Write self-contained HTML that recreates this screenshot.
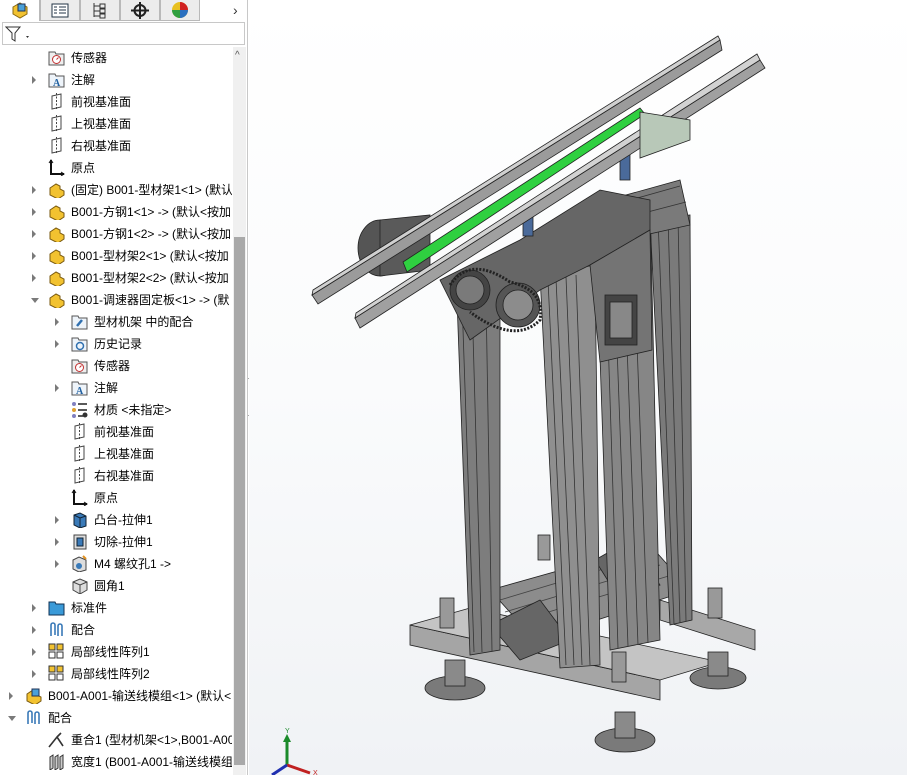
<!DOCTYPE html><html><head><meta charset="utf-8"><style>
*{margin:0;padding:0;box-sizing:border-box}
body{width:907px;height:775px;overflow:hidden;background:#fff;font-family:"Liberation Sans","Noto Sans CJK SC",sans-serif;font-size:12px;color:#000;position:relative}
#panel{position:absolute;left:0;top:0;width:248px;height:775px;background:#fff;border-right:1px solid #c8c8c8;overflow:hidden}
.tab{position:absolute;top:0;height:21px;width:40px;background:#ececec;border:1px solid #b9b9b9;border-top:none}
.row{position:absolute;height:22px;line-height:22px;white-space:nowrap}
.ex{position:absolute;width:0;height:0;border-top:4px solid transparent;border-bottom:4px solid transparent;border-left:4px solid #7a7a7a}
.ex.o{border-left:4px solid transparent;border-right:4px solid transparent;border-top:5px solid #7a7a7a;border-bottom:none}
.ic{position:absolute;width:17px;height:17px}
.t{position:absolute}
#vp{position:absolute;left:249px;top:0;width:658px;height:775px;background:linear-gradient(#fff 0%,#fafbfc 50%,#f0f2f5 100%)}
</style></head><body>
<div id="panel">
<div class="tab" style="left:0;background:#fff;border-bottom:none;border-left:none"></div>
<svg style="position:absolute;left:10px;top:1px" width="20" height="18"><path d="M3 6 L10 2 L17 6 L17 13 L10 17 L3 13Z" fill="#f2c230" stroke="#8a6a10"/><rect x="8" y="3" width="7" height="7" fill="#4aa0d8" stroke="#235"/></svg>
<div class="tab" style="left:40px"></div><svg style="position:absolute;left:51px;top:3px" width="18" height="15"><rect x="1" y="1" width="16" height="13" fill="#fff" stroke="#234"/><path d="M3 4h3M8 4h7M3 7h3M8 7h7M3 10h3M8 10h7" stroke="#234"/></svg>
<div class="tab" style="left:80px"></div><svg style="position:absolute;left:92px;top:2px" width="16" height="17"><path d="M2 1v14M2 4h6M2 9h6M2 14h6" stroke="#333" fill="none"/><rect x="8" y="2" width="5" height="4" fill="none" stroke="#333"/><rect x="8" y="7" width="5" height="4" fill="none" stroke="#333"/><rect x="8" y="12" width="5" height="4" fill="none" stroke="#333"/></svg>
<div class="tab" style="left:120px"></div><svg style="position:absolute;left:131px;top:2px" width="18" height="17"><circle cx="9" cy="8.5" r="5.5" fill="none" stroke="#222" stroke-width="2"/><path d="M9 0v17M0 8.5h18" stroke="#222" stroke-width="2"/></svg>
<div class="tab" style="left:160px"></div><svg style="position:absolute;left:171px;top:1px" width="18" height="18"><circle cx="9" cy="9" r="8" fill="#e8c020"/><path d="M9 9L9 1A8 8 0 0 1 17 9Z" fill="#d02020"/><path d="M9 9L17 9A8 8 0 0 1 9 17Z" fill="#2a70c0"/><path d="M9 9L9 17A8 8 0 0 1 1 9Z" fill="#30a040"/></svg>
<div style="position:absolute;left:233px;top:2px;font-size:14px;color:#333">›</div>
<div style="position:absolute;left:2px;top:22px;width:243px;height:23px;border:1px solid #c8c8c8;background:#fff"></div>
<svg style="position:absolute;left:5px;top:25px" width="26" height="18"><path d="M1 2h14l-5 6v8l-3-2v-6Z" fill="#fff" stroke="#333"/><path d="M21 11l3 0-1.5 2z" fill="#333"/></svg>
<div style="position:absolute;left:233px;top:47px;width:13px;height:728px;background:#f0f0f0"></div>
<div style="position:absolute;left:235px;top:50px;color:#555;font-size:10px">^</div>
<div style="position:absolute;left:234px;top:237px;width:11px;height:528px;background:#a9a9a9"></div>
<div id="tree" style="position:absolute;left:0;top:0;width:232px;height:775px;overflow:hidden"></div>
</div>
<div style="position:absolute;left:248px;top:378px;width:9px;height:38px;background:#fff;border:1px solid #aaa;border-left:none"></div>
<div style="position:absolute;left:250px;top:393px;width:5px;height:5px;border-radius:50%;background:#bbb"></div>
<div id="vp">
<svg width="658" height="775" viewBox="249 0 658 775" style="position:absolute;left:0;top:0">
<g stroke="#222" stroke-width="0.8">
<!-- base -->
<polygon points="660,600 755,630 755,650 660,620" fill="#a8a8a8"/>
<polygon points="410,625 660,680 660,700 410,645" fill="#a5a5a5"/>
<polygon points="410,625 470,608 720,662 660,680" fill="#c4c4c4"/>
<ellipse cx="455" cy="688" rx="30" ry="12" fill="#7a7a7a"/><rect x="445" y="660" width="20" height="26" fill="#8a8a8a"/>
<ellipse cx="625" cy="740" rx="30" ry="12" fill="#7a7a7a"/><rect x="615" y="712" width="20" height="26" fill="#8a8a8a"/>
<ellipse cx="718" cy="678" rx="28" ry="11" fill="#7a7a7a"/><rect x="708" y="652" width="20" height="24" fill="#8a8a8a"/>
<rect x="440" y="598" width="14" height="30" fill="#999"/><rect x="612" y="652" width="14" height="30" fill="#999"/><rect x="708" y="588" width="14" height="30" fill="#999"/><rect x="538" y="535" width="12" height="25" fill="#999"/>
<!-- lower frame -->
<polygon points="490,590 650,545 690,590 535,640" fill="#8c8c8c"/>
<path d="M500 600L650 555M505 612L660 565M515 622L672 575" stroke="#444"/>
<polygon points="490,625 540,600 570,640 520,660" fill="#666"/>
<polygon points="595,560 630,540 660,585 620,600" fill="#666"/>
<!-- legs -->
<polygon points="457,300 500,292 500,650 470,655" fill="#7d7d7d"/>
<polygon points="650,220 690,215 692,620 670,625" fill="#7a7a7a"/>
<polygon points="595,210 650,200 660,640 610,650" fill="#868686"/>
<polygon points="540,275 595,265 600,665 560,668" fill="#8f8f8f"/>
<path d="M548 280L566 665M556 279L574 665M566 277L582 665M576 275L590 665M604 212L618 648M612 211L628 646M622 209L638 645M632 207L648 643M462 300L474 652M472 299L482 652M486 297L492 651M658 219L674 624M668 218L680 623M678 217L686 621" stroke="#333"/>
<!-- top frame / gearbox -->
<polygon points="590,205 680,180 690,225 600,245" fill="#7a7a7a"/>
<path d="M595 210l85-24M598 225l88-23" stroke="#333"/>
<polygon points="440,280 520,240 600,190 650,200 650,230 590,265 540,290 470,340" fill="#666"/>
<polygon points="590,265 650,230 652,350 600,362" fill="#747474"/>
<rect x="605" y="295" width="32" height="50" fill="#444"/><rect x="610" y="302" width="22" height="36" fill="#888"/>
<circle cx="470" cy="290" r="20" fill="#444"/><circle cx="470" cy="290" r="14" fill="#7a7a7a"/>
<circle cx="518" cy="305" r="22" fill="#555"/><circle cx="518" cy="305" r="15" fill="#8c8c8c"/>
<path d="M450 285Q470 255 510 282Q545 290 540 320Q515 345 470 312" fill="none" stroke="#222" stroke-width="3" stroke-dasharray="2 1.5"/>
<ellipse cx="380" cy="248" rx="22" ry="28" fill="#555"/><polygon points="380,220 430,215 430,270 380,276" fill="#5a5a5a"/>
<rect x="620" y="150" width="10" height="30" fill="#4a6a9a"/><rect x="523" y="210" width="10" height="26" fill="#4a6a9a"/>
<!-- rails -->
<polygon points="312,295 720,40 722,50 318,304" fill="#9b9b9b"/>
<polygon points="313,290 718,36 720,40 312,295" fill="#d0d0d0"/>
<polygon points="355,318 760,60 765,68 360,328" fill="#a0a0a0"/>
<polygon points="356,313 757,54 760,60 355,318" fill="#d2d2d2"/>
<polygon points="403,262 640,108 645,114 407,272" fill="#2fd040"/>
<polygon points="640,112 690,120 690,140 640,158" fill="#b8c8b8"/>
</g>
<!-- triad -->
<path d="M287 765V738" stroke="#1a8a2a" stroke-width="3"/><path d="M283 742l4-8 4 8z" fill="#1a8a2a"/>
<path d="M287 765L310 773" stroke="#c02020" stroke-width="3"/><path d="M287 765L272 775" stroke="#2030b0" stroke-width="3"/>
<text x="285" y="733" font-size="7" fill="#1a8a2a" font-family="Liberation Sans">Y</text>
<text x="313" y="775" font-size="7" fill="#c02020" font-family="Liberation Sans">X</text>
</svg>
</div>
<script>
var rows=[
[1,0,'sensor','传感器'],[1,1,'note','注解'],[1,0,'plane','前视基准面'],[1,0,'plane','上视基准面'],[1,0,'plane','右视基准面'],[1,0,'origin','原点'],
[1,1,'part','(固定) B001-型材架1<1> (默认<按'],[1,1,'part','B001-方钢1<1> -> (默认<按加'],[1,1,'part','B001-方钢1<2> -> (默认<按加'],[1,1,'part','B001-型材架2<1> (默认<按加'],[1,1,'part','B001-型材架2<2> (默认<按加'],[1,2,'part','B001-调速器固定板<1> -> (默'],
[2,1,'mates','型材机架 中的配合'],[2,1,'hist','历史记录'],[2,0,'sensor','传感器'],[2,1,'note','注解'],[2,0,'mat','材质 <未指定>'],[2,0,'plane','前视基准面'],[2,0,'plane','上视基准面'],[2,0,'plane','右视基准面'],[2,0,'origin','原点'],
[2,1,'boss','凸台-拉伸1'],[2,1,'cut','切除-拉伸1'],[2,1,'hole','M4 螺纹孔1 ->'],[2,0,'fillet','圆角1'],
[1,1,'folder','标准件'],[1,1,'clip','配合'],[1,1,'pat','局部线性阵列1'],[1,1,'pat','局部线性阵列2'],
[0,1,'asm','B001-A001-输送线模组<1> (默认<'],[0,2,'clip','配合'],[1,0,'coin','重合1 (型材机架<1>,B001-A001'],[1,0,'width','宽度1 (B001-A001-输送线模组']];
var I={
sensor:'<path d="M1 3h6l1 2h8v11H1z" fill="#eee" stroke="#555"/><circle cx="8.5" cy="10.5" r="4" fill="#fff" stroke="#c03030"/><path d="M8.5 10.5l2-2" stroke="#c03030"/>',
note:'<path d="M1 3h6l1 2h8v11H1z" fill="#eef4fa" stroke="#555"/><text x="5" y="15" font-size="10" font-weight="bold" fill="#2060a0" font-family="Liberation Serif">A</text>',
plane:'<path d="M4 3l9-2v13l-9 2z" fill="none" stroke="#444"/><path d="M8.5 0v17" stroke="#444" stroke-dasharray="2 1.5"/>',
origin:'<path d="M3 1v14h13" fill="none" stroke="#111" stroke-width="2"/><path d="M1 4l2-3 2 3M13 13l3 2-3 2" fill="none" stroke="#111"/>',
part:'<path d="M2 7l6-4 4 2 0 3 4 2v4l-6 4-8-4z" fill="#f2c230" stroke="#7a5a10"/>',
asm:'<path d="M2 7l6-4 4 2 0 3 4 2v4l-6 4-8-4z" fill="#f2c230" stroke="#7a5a10"/><rect x="7" y="2" width="7" height="7" fill="#4aa0d8" stroke="#235"/>',
mates:'<path d="M1 3h6l1 2h8v11H1z" fill="#eef4fa" stroke="#555"/><path d="M6 13l5-6" stroke="#3070b0" stroke-width="2.5"/>',
hist:'<path d="M1 3h6l1 2h8v11H1z" fill="#eef4fa" stroke="#555"/><circle cx="9" cy="11" r="3.5" fill="none" stroke="#3070b0" stroke-width="1.5"/>',
mat:'<circle cx="3" cy="3" r="2" fill="#8080c0"/><circle cx="3" cy="9" r="2" fill="#e0a030"/><circle cx="3" cy="15" r="2" fill="#8080c0"/><path d="M7 3h9M7 9h9M7 15h5" stroke="#222" stroke-width="1.5"/><circle cx="14" cy="14" r="2.5" fill="#333"/>',
boss:'<path d="M3 4l6-2 6 3v10l-6 2-6-3z" fill="#3a7ab8" stroke="#123"/><path d="M3 4l6 3 6-2M9 7v10" stroke="#123" fill="none"/>',
cut:'<rect x="3" y="2" width="12" height="14" fill="#ddd" stroke="#444"/><rect x="6" y="5" width="6" height="8" fill="#3a7ab8" stroke="#123"/>',
hole:'<path d="M2 5l6-3 7 3v10l-7 2-6-3z" fill="#ddd" stroke="#444"/><circle cx="8" cy="11" r="3" fill="#3a7ab8"/><path d="M12 1l3 3" stroke="#e09020" stroke-width="2"/>',
fillet:'<path d="M2 5l7-3 7 3v8l-7 4-7-4z" fill="#ddd" stroke="#444"/><path d="M2 5l7 3 7-3M9 8v9" stroke="#444" fill="none"/>',
folder:'<path d="M1 3h6l1 2h8v11H1z" fill="#3a9ad8" stroke="#135"/>',
clip:'<path d="M3 15V4a2 2 0 0 1 4 0v10M10 15V5a2 2 0 0 1 4 0v10" fill="none" stroke="#3a7ab8" stroke-width="1.6"/>',
pat:'<rect x="1" y="1" width="6" height="6" fill="#f2c230" stroke="#333"/><rect x="9" y="1" width="6" height="6" fill="#f2c230" stroke="#333"/><rect x="1" y="9" width="6" height="6" fill="#fff" stroke="#333"/><rect x="9" y="9" width="6" height="6" fill="#fff" stroke="#333"/>',
coin:'<path d="M1 16L9 6l6 9M9 6l4-4" fill="none" stroke="#333" stroke-width="1.6"/>',
width:'<path d="M2 4l3-2v13l-3 2zM7 4l3-2v13l-3 2zM12 4l3-2v13l-3 2z" fill="#ccc" stroke="#333"/>'};
var h='';
rows.forEach(function(r,i){var y=47+i*22,L=r[0],ex=8+L*23,ic=25+L*23,tx=48+L*23;
if(r[1]==1)h+='<div class="ex" style="left:'+(ex+1)+'px;top:'+(y+7)+'px"></div>';
if(r[1]==2)h+='<div class="ex o" style="left:'+ex+'px;top:'+(y+9)+'px"></div>';
h+='<svg class="ic" style="left:'+ic+'px;top:'+(y+2)+'px" viewBox="0 0 17 17">'+I[r[2]]+'</svg>';
h+='<div class="row t" style="left:'+tx+'px;top:'+y+'px">'+r[3].replace(/</g,'&lt;')+'</div>';});
document.getElementById('tree').innerHTML=h;
</script>
</body></html>
